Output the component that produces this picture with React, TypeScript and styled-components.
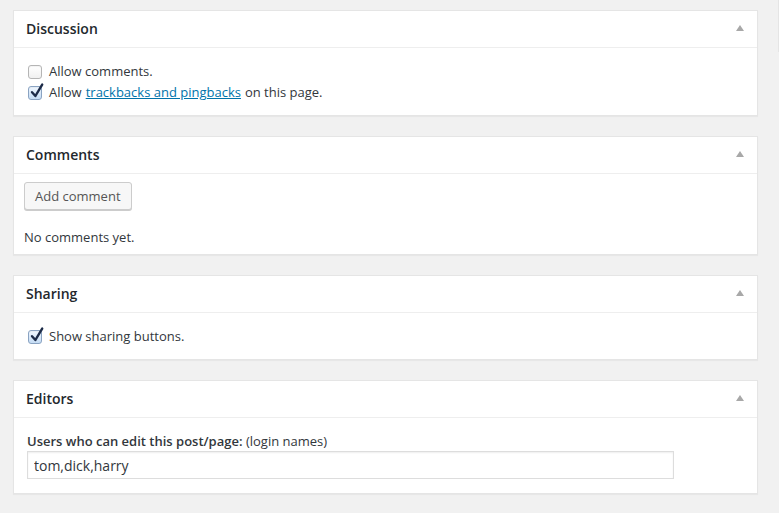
import React from "react";
import styled, { createGlobalStyle } from "styled-components";

const Global = createGlobalStyle`
  html, body { margin: 0; padding: 0; background: #f1f1f1; }
  body {
    font-family: "Open Sans", "Noto Sans", "Liberation Sans", sans-serif;
    font-size: 13px;
    color: #444;
    -webkit-font-smoothing: antialiased;
  }
  * { box-sizing: border-box; }
`;

const Page = styled.div`
  display: flex;
  align-items: flex-start;
  width: 779px;
  min-height: 513px;
`;

const Main = styled.div`
  width: 778px;
  padding: 10px 20px 0 13px;
  display: flex;
  flex-direction: column;
  gap: 20px;
`;

const SideEdge = styled.div`
  width: 1px;
  height: 52px;
  background: #e5e5e5;
`;

const Panel = styled.section`
  background: #fff;
  border: 1px solid #e5e5e5;
  box-shadow: 0 1px 1px rgba(0, 0, 0, 0.04);
`;

const Header = styled.div`
  display: flex;
  align-items: center;
  justify-content: space-between;
  height: 37px;
  padding: 0 13px 1px 12px;
  border-bottom: 1px solid #eee;
`;

const Title = styled.h2`
  margin: 0;
  font-size: 14px;
  font-weight: 600;
  color: #23282d;
  line-height: 20px;
`;

const Toggle = styled.span`
  width: 0;
  height: 0;
  border-left: 4.5px solid transparent;
  border-right: 4.5px solid transparent;
  border-bottom: 6px solid #a8a8a8;
  margin-top: -1px;
`;

const Body = styled.div<{ $pt: number; $pb: number }>`
  padding: ${(p) => p.$pt}px 10px ${(p) => p.$pb}px 10px;
`;

const CheckRow = styled.label`
  display: flex;
  align-items: center;
  height: 21px;
  padding-left: 4px;
  color: #32373c;
  line-height: 21px;
`;

const Box = styled.span<{ $checked: boolean }>`
  position: relative;
  flex: none;
  width: 14px;
  height: 14px;
  margin-right: 7px;
  border-radius: 3px;
  border: 1px solid ${(p) => (p.$checked ? "#8aa3c2" : "#b5b5b5")};
  background: ${(p) =>
    p.$checked
      ? "linear-gradient(#f0f7ff, #c5dcf4)"
      : "linear-gradient(#ffffff, #f0f0f0)"};
  box-shadow: inset 0 1px 1px rgba(0, 0, 0, 0.05);
`;

const Tick = styled.svg`
  position: absolute;
  left: 1px;
  top: -4px;
  width: 14px;
  height: 16px;
  overflow: visible;
`;

const Link = styled.a`
  color: #0073aa;
  text-decoration: underline;
  margin: 0 4px;
`;

const Button = styled.button`
  display: block;
  height: 28px;
  padding: 0 10px;
  font-family: inherit;
  font-size: 13px;
  color: #555;
  background: #f7f7f7;
  border: 1px solid #ccc;
  border-radius: 3px;
  box-shadow: 0 1px 0 #ccc;
  line-height: 26px;
`;

const Note = styled.p`
  margin: 17px 0 0;
  line-height: 20px;
  color: #32373c;
`;

const FieldLabel = styled.div`
  line-height: 20px;
  padding-left: 3px;
  color: #32373c;
  b { font-weight: 600; }
`;

const TextInput = styled.input`
  display: block;
  margin-left: 3px;
  width: 647px;
  height: 28px;
  padding: 0 6px;
  font-family: inherit;
  font-size: 14px;
  color: #32373c;
  border: 1px solid #ddd;
  box-shadow: inset 0 1px 2px rgba(0, 0, 0, 0.07);
  background: #fff;
  outline: none;
`;

function Check({ checked, children }: { checked: boolean; children: React.ReactNode }) {
  return (
    <CheckRow>
      <Box $checked={checked}>
        {checked && (
          <Tick viewBox="0 0 14 16">
            <path
              d="M2 9.2 L5.4 13 L12.2 1.6"
              fill="none"
              stroke="#1c2b48"
              strokeWidth="2.4"
              strokeLinecap="round"
              strokeLinejoin="round"
            />
          </Tick>
        )}
      </Box>
      <span>{children}</span>
    </CheckRow>
  );
}

function MetaBox({ title, children }: { title: string; children: React.ReactNode }) {
  return (
    <Panel>
      <Header>
        <Title>{title}</Title>
        <Toggle />
      </Header>
      {children}
    </Panel>
  );
}

export default function App() {
  return (
    <>
      <Global />
      <Page>
        <Main>
          <MetaBox title="Discussion">
            <Body $pt={13} $pb={12}>
              <Check checked={false}>Allow comments.</Check>
              <Check checked>
                Allow<Link href="#">trackbacks and pingbacks</Link>on this page.
              </Check>
            </Body>
          </MetaBox>
          <MetaBox title="Comments">
            <Body $pt={8} $pb={7}>
              <Button>Add comment</Button>
              <Note>No comments yet.</Note>
            </Body>
          </MetaBox>
          <MetaBox title="Sharing">
            <Body $pt={13} $pb={12}>
              <Check checked>Show sharing buttons.</Check>
            </Body>
          </MetaBox>
          <MetaBox title="Editors">
            <Body $pt={13} $pb={14}>
              <FieldLabel>
                <b>Users who can edit this post/page:</b> (login names)
              </FieldLabel>
              <TextInput defaultValue="tom,dick,harry" />
            </Body>
          </MetaBox>
        </Main>
        <SideEdge />
      </Page>
    </>
  );
}
